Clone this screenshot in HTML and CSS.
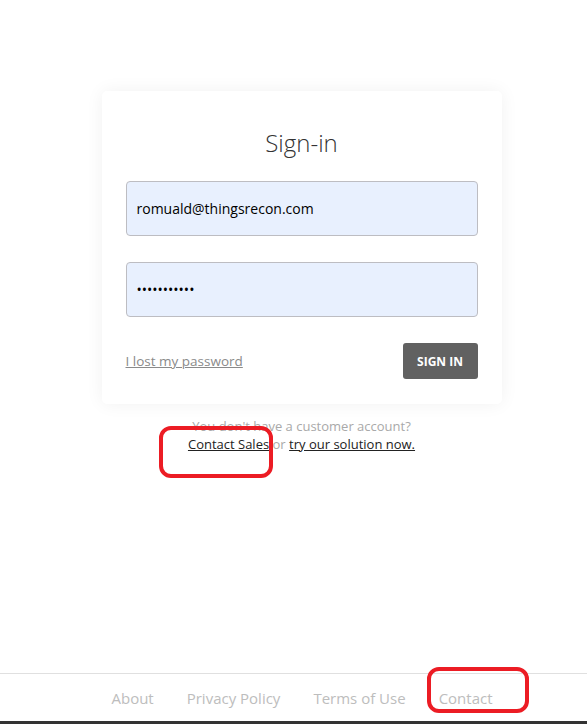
FILE: index.html
```html
<!DOCTYPE html>
<html lang="en">
<head>
  <meta charset="UTF-8">
  <meta name="viewport" content="width=device-width, initial-scale=1.0">
  <title>Sign-in</title>
  <link rel="stylesheet" href="styles.css">
</head>
<body>

  <div class="page">
    <main class="content">
      <div class="card">
        <h1>Sign-in</h1>
        <form class="login-form">
          <input type="text" class="field" value="romuald@thingsrecon.com" />
          <input type="password" class="field" value="secretpass1" />
          <div class="form-actions">
            <a href="#" class="lost-link">I lost my password</a>
            <button type="button" class="btn-signin">Sign in</button>
          </div>
        </form>
      </div>

      <div class="no-account">
        <p class="muted">You don't have a customer account?</p>
        <p class="links">
          <a href="#" class="dark-link mark-wrap">Contact Sales<span class="mark mark-sales"></span></a>
          <span class="muted">or</span>
          <a href="#" class="dark-link">try our solution now.</a>
        </p>
      </div>
    </main>

    <footer class="footer">
      <a href="#">About</a>
      <a href="#">Privacy Policy</a>
      <a href="#">Terms of Use</a>
      <a href="#" class="mark-wrap">Contact<span class="mark mark-contact"></span></a>
    </footer>
    <div class="bottom-bar"></div>
  </div>

</body>
</html>
```

FILE: styles.css
```css
* {
  box-sizing: border-box;
}

body {
  margin: 0;
  font-family: "Open Sans", Arial, sans-serif;
  background-color: #fff;
  color: #333;
}

.page {
  min-height: 724px;
  display: flex;
  flex-direction: column;
}

.content {
  flex: 1;
  display: flex;
  flex-direction: column;
  align-items: center;
  padding-top: 91px;
  padding-left: 16px;
}

.card {
  width: 400px;
  background: #fff;
  border-radius: 5px;
  box-shadow: 0 0 18px rgba(0,0,0,0.06);
  padding: 34px 24px 25px;
}

h1 {
  margin: 0 0 20px;
  text-align: center;
  font-size: 24px;
  font-weight: 300;
  color: #333;
  line-height: 36px;
}

.login-form {
  display: flex;
  flex-direction: column;
}

.field {
  height: 55px;
  margin-bottom: 26px;
  padding: 0 10px;
  font-family: inherit;
  font-size: 14px;
  color: #000;
  background-color: #e8f0fe;
  border: 1px solid #bdbdc2;
  border-radius: 4px;
}

.form-actions {
  display: flex;
  justify-content: space-between;
  align-items: center;
}

.lost-link {
  font-size: 13.5px;
  color: #8a8a8a;
  text-decoration: underline;
}

.btn-signin {
  width: 75px;
  height: 36px;
  font-family: inherit;
  font-size: 12px;
  font-weight: 700;
  text-transform: uppercase;
  color: #fff;
  background-color: #616161;
  border: none;
  border-radius: 3px;
}

.no-account {
  margin-top: 13px;
  text-align: center;
  font-size: 13px;
}

.no-account p {
  margin: 0;
  line-height: 18px;
}

.muted {
  color: #a9a9a9;
}

.dark-link {
  color: #222;
  text-decoration: underline;
}

.footer {
  height: 48px;
  border-top: 1px solid #e0e0e0;
  display: flex;
  justify-content: center;
  align-items: center;
  gap: 33px;
  padding-left: 17px;
}

.footer a {
  font-size: 15px;
  color: #bdbdbd;
  text-decoration: none;
}

.bottom-bar {
  height: 3px;
  background-color: #333;
}

/* red annotation marks */
.mark-wrap {
  position: relative;
}

.mark {
  position: absolute;
  border: 4px solid #ec1c24;
  border-radius: 12px;
}

.mark-sales {
  left: -29px;
  top: -9px;
  width: 114px;
  height: 52px;
}

.mark-contact {
  left: -12px;
  top: -21px;
  width: 102px;
  height: 46px;
}
```
